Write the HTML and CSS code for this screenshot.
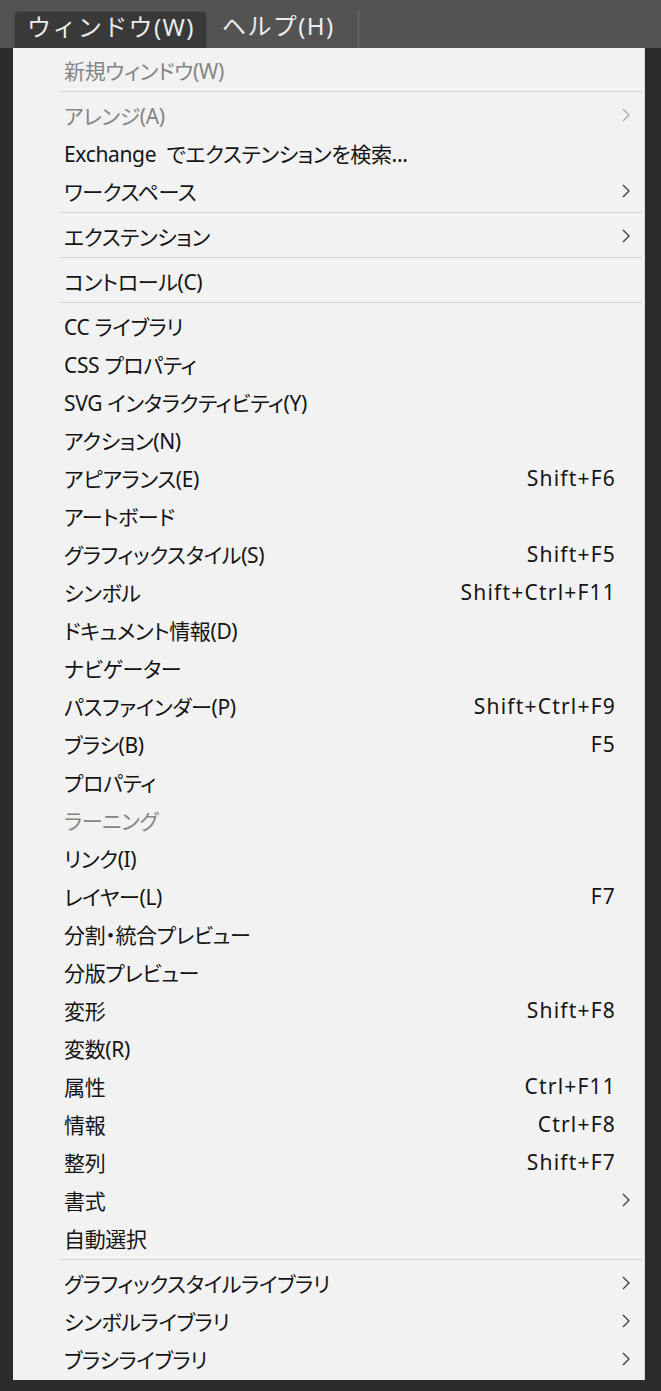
FILE: index.html
```html
<!DOCTYPE html>
<html lang="ja">
<head>
<meta charset="utf-8">
<title>ウィンドウ メニュー</title>
<link rel="stylesheet" href="styles.css">
</head>
<body>
<header class="menubar">
  <div class="top-item active">ウィンドウ(W)</div>
  <div class="top-item">ヘルプ(H)</div>
  <div class="top-divider"></div>
</header>
<div class="stage">
  <div class="menu">
    <div class="row disabled"><span class="label">新規ウィンドウ(W)</span><span class="key"></span><span class="sub"></span></div>
    <div class="sep"></div>
    <div class="row disabled"><span class="label">アレンジ(A)</span><span class="key"></span><span class="sub"><svg viewBox="0 0 8 14" width="8" height="14"><polyline points="1,1 7,7 1,13"/></svg></span></div>
    <div class="row"><span class="label">Exchange&nbsp; でエクステンションを検索...</span><span class="key"></span><span class="sub"></span></div>
    <div class="row"><span class="label">ワークスペース</span><span class="key"></span><span class="sub"><svg viewBox="0 0 8 14" width="8" height="14"><polyline points="1,1 7,7 1,13"/></svg></span></div>
    <div class="sep"></div>
    <div class="row"><span class="label">エクステンション</span><span class="key"></span><span class="sub"><svg viewBox="0 0 8 14" width="8" height="14"><polyline points="1,1 7,7 1,13"/></svg></span></div>
    <div class="sep"></div>
    <div class="row"><span class="label">コントロール(C)</span><span class="key"></span><span class="sub"></span></div>
    <div class="sep"></div>
    <div class="row"><span class="label">CC ライブラリ</span><span class="key"></span><span class="sub"></span></div>
    <div class="row"><span class="label">CSS プロパティ</span><span class="key"></span><span class="sub"></span></div>
    <div class="row"><span class="label">SVG インタラクティビティ(Y)</span><span class="key"></span><span class="sub"></span></div>
    <div class="row"><span class="label">アクション(N)</span><span class="key"></span><span class="sub"></span></div>
    <div class="row"><span class="label">アピアランス(E)</span><span class="key">Shift+F6</span><span class="sub"></span></div>
    <div class="row"><span class="label">アートボード</span><span class="key"></span><span class="sub"></span></div>
    <div class="row"><span class="label">グラフィックスタイル(S)</span><span class="key">Shift+F5</span><span class="sub"></span></div>
    <div class="row"><span class="label">シンボル</span><span class="key">Shift+Ctrl+F11</span><span class="sub"></span></div>
    <div class="row"><span class="label">ドキュメント情報(D)</span><span class="key"></span><span class="sub"></span></div>
    <div class="row"><span class="label">ナビゲーター</span><span class="key"></span><span class="sub"></span></div>
    <div class="row"><span class="label">パスファインダー(P)</span><span class="key">Shift+Ctrl+F9</span><span class="sub"></span></div>
    <div class="row"><span class="label">ブラシ(B)</span><span class="key">F5</span><span class="sub"></span></div>
    <div class="row"><span class="label">プロパティ</span><span class="key"></span><span class="sub"></span></div>
    <div class="row disabled"><span class="label">ラーニング</span><span class="key"></span><span class="sub"></span></div>
    <div class="row"><span class="label">リンク(I)</span><span class="key"></span><span class="sub"></span></div>
    <div class="row"><span class="label">レイヤー(L)</span><span class="key">F7</span><span class="sub"></span></div>
    <div class="row"><span class="label">分割・統合プレビュー</span><span class="key"></span><span class="sub"></span></div>
    <div class="row"><span class="label">分版プレビュー</span><span class="key"></span><span class="sub"></span></div>
    <div class="row"><span class="label">変形</span><span class="key">Shift+F8</span><span class="sub"></span></div>
    <div class="row"><span class="label">変数(R)</span><span class="key"></span><span class="sub"></span></div>
    <div class="row"><span class="label">属性</span><span class="key">Ctrl+F11</span><span class="sub"></span></div>
    <div class="row"><span class="label">情報</span><span class="key">Ctrl+F8</span><span class="sub"></span></div>
    <div class="row"><span class="label">整列</span><span class="key">Shift+F7</span><span class="sub"></span></div>
    <div class="row"><span class="label">書式</span><span class="key"></span><span class="sub"><svg viewBox="0 0 8 14" width="8" height="14"><polyline points="1,1 7,7 1,13"/></svg></span></div>
    <div class="row"><span class="label">自動選択</span><span class="key"></span><span class="sub"></span></div>
    <div class="sep"></div>
    <div class="row"><span class="label">グラフィックスタイルライブラリ</span><span class="key"></span><span class="sub"><svg viewBox="0 0 8 14" width="8" height="14"><polyline points="1,1 7,7 1,13"/></svg></span></div>
    <div class="row"><span class="label">シンボルライブラリ</span><span class="key"></span><span class="sub"><svg viewBox="0 0 8 14" width="8" height="14"><polyline points="1,1 7,7 1,13"/></svg></span></div>
    <div class="row"><span class="label">ブラシライブラリ</span><span class="key"></span><span class="sub"><svg viewBox="0 0 8 14" width="8" height="14"><polyline points="1,1 7,7 1,13"/></svg></span></div>
  </div>
</div>
</body>
</html>
```

FILE: styles.css
```css
html, body {
  margin: 0;
  padding: 0;
}

body {
  background: #2b2b2b;
  font-family: "Noto Sans", "Noto Sans CJK JP", sans-serif;
  width: 661px;
  height: 1391px;
  overflow: hidden;
}

.menubar {
  height: 48px;
  background: #535353;
  display: flex;
  align-items: flex-end;
  padding-left: 14px;
  box-sizing: border-box;
}

.top-item {
  height: 37px;
  display: flex;
  align-items: flex-start;
  line-height: 29px;
  color: #ececec;
  font-size: 24px;
  padding: 0 10px 0 12px;
  box-sizing: border-box;
  letter-spacing: 1.4px;
  white-space: nowrap;
}

.top-item.active {
  width: 193px;
  background: #393939;
  border: 1px solid #4a4a4a;
  border-bottom: none;
  border-radius: 4px 4px 0 0;
}

.top-item + .top-item {
  margin-left: 1px;
  padding-left: 14px;
  width: 141px;
}

.top-divider {
  width: 3px;
  height: 38px;
  background: #5d5d5d;
  margin-left: 8px;
}

.stage {
  padding-left: 13px;
}

.menu {
  width: 632px;
  background: #f2f2f2;
  padding-top: 3px;
  padding-bottom: 2px;
  box-sizing: border-box;
  border-right: 1px solid #d8d8d8;
  font-feature-settings: "palt";
}

.row {
  height: 38px;
  display: grid;
  grid-template-columns: 1fr auto 29px;
  align-items: center;
  padding-left: 51px;
  color: #141414;
  font-size: 21px;
}

.label {
  white-space: nowrap;
  letter-spacing: -0.35px;
}

.key {
  font-size: 21px;
  white-space: nowrap;
  text-align: right;
  letter-spacing: 1.2px;
  margin-right: -1px;
}

.sub {
  display: flex;
  align-items: center;
  padding-left: 7px;
}

.sub svg polyline {
  fill: none;
  stroke: #3a3a3a;
  stroke-width: 1.3;
}

.row.disabled {
  color: #858585;
}

.row.disabled .sub svg polyline {
  stroke: #a5a5a5;
}

.sep {
  height: 1px;
  background: #d4d4d4;
  margin: 2px 2px 4px 47px;
}
```
